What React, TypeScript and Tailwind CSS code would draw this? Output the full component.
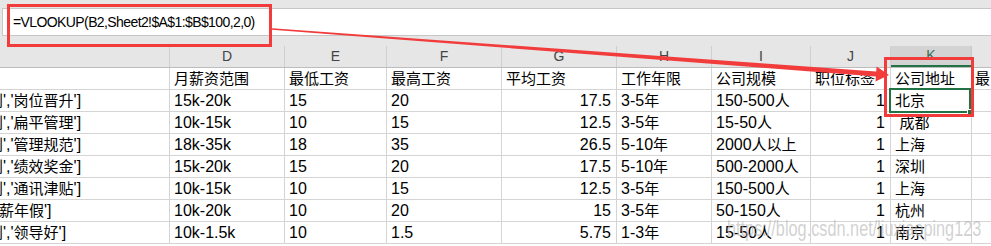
import React from "react";

const widths = [
  "w-[170px]",
  "w-[115px]",
  "w-[102px]",
  "w-[115px]",
  "w-[115px]",
  "w-[95px]",
  "w-[99px]",
  "w-[80px]",
  "w-[81px]",
  "flex-1",
];

const letters = ["", "D", "E", "F", "G", "H", "I", "J", "K", ""];

type Row = { c: string; off: string; cells: string[] };

const rows: Row[] = [
  { c: "", off: "", cells: ["月薪资范围", "最低工资", "最高工资", "平均工资", "工作年限", "公司规模", "职位标签", "公司地址", "最"] },
  { c: "利','岗位晋升']", off: "-ml-[12px]", cells: ["15k-20k", "15", "20", "17.5", "3-5年", "150-500人", "1", "北京", ""] },
  { c: "利','扁平管理']", off: "-ml-[12px]", cells: ["10k-15k", "10", "15", "12.5", "3-5年", "15-50人", "1", " 成都", ""] },
  { c: "利','管理规范']", off: "-ml-[12px]", cells: ["18k-35k", "18", "35", "26.5", "5-10年", "2000人以上", "1", "上海", ""] },
  { c: "利','绩效奖金']", off: "-ml-[12px]", cells: ["15k-20k", "15", "20", "17.5", "5-10年", "500-2000人", "1", "深圳", ""] },
  { c: "利','通讯津贴']", off: "-ml-[12px]", cells: ["10k-15k", "10", "15", "12.5", "3-5年", "150-500人", "1", "上海", ""] },
  { c: "薪年假']", off: "-ml-[1px]", cells: ["10k-20k", "10", "20", "15", "3-5年", "50-150人", "1", "杭州", ""] },
  { c: "利','领导好']", off: "-ml-[12px]", cells: ["10k-1.5k", "10", "1.5", "5.75", "1-3年", "15-50人", "1", "南京", ""] },
];

// CJK runs a bit smaller than the latin text, like the sheet font
function Txt({ s }: { s: string }) {
  const parts = s.split(/([\u2E80-\u9FFF]+)/);
  return (
    <>
      {parts.map((p, i) =>
        /[\u2E80-\u9FFF]/.test(p) ? (
          <span key={i} className="text-[15px]">
            {p}
          </span>
        ) : (
          <span key={i} className="whitespace-pre">{p}</span>
        )
      )}
    </>
  );
}

export default function App() {
  return (
    <div className="relative w-[991px] h-[246px] overflow-hidden bg-white text-black font-['Liberation_Sans','Noto_Sans_CJK_SC',sans-serif]">
      {/* formula bar */}
      <div className="h-[46px] bg-[#e6e6e6] pt-[8px] pl-[2px]">
        <div className="h-[28px] bg-white border border-r-0 border-[#c6c6c6] pl-[10px] text-[14px] tracking-[-0.6px] leading-[26px]">
          =VLOOKUP(B2,Sheet2!$A$1:$B$100,2,0)
        </div>
      </div>

      {/* column letters */}
      <div className="flex h-[22px] bg-[#e6e6e6] border-b border-[#bdbdbd] text-[14px] text-[#444]">
        {widths.map((w, i) => (
          <div
            key={i}
            className={
              i === 8
                ? `${w} shrink-0 flex items-center justify-center bg-[#d3d3d3] border-r border-[#c8c8c8] border-b-2 border-b-[#217346] text-[#3d6b4f]`
                : `${w} shrink-0 flex items-center justify-center border-r border-[#cfcfcf] ${i === 9 ? "border-r-0" : ""}`
            }
          >
            {letters[i]}
          </div>
        ))}
      </div>

      {/* cells */}
      {rows.map((r, ri) => (
        <div key={ri} className="flex h-[22px] border-b border-[#d4d4d4] text-[16px] leading-[22px]">
          <div className={`${widths[0]} shrink-0 overflow-hidden whitespace-nowrap border-r border-[#d4d4d4]`}>
            <span className={`inline-block ${r.off}`}>
              <Txt s={r.c} />
            </span>
          </div>
          {r.cells.map((c, ci) => {
            const right = ri > 0 && (ci === 3 || ci === 6);
            return (
              <div
                key={ci}
                className={`${widths[ci + 1]} shrink-0 overflow-hidden whitespace-nowrap ${
                  ci === 8 ? "pl-[3px]" : "border-r border-[#d4d4d4] px-[4px]"
                } ${right ? "text-right pr-[5px]" : ""}`}
              >
                <Txt s={c} />
              </div>
            );
          })}
        </div>
      ))}

      {/* watermark */}
      <div className="absolute left-[727px] top-[212px] pointer-events-none origin-left scale-x-[0.74] whitespace-nowrap text-[22px] text-[#b4b4b4]/60">
        https://blog.csdn.net/liuxiaoping123
      </div>

      {/* selected cell K2 */}
      <div className="absolute left-[889px] top-[88px] w-[82px] h-[25px] border-2 border-[#217346]">
        <div className="absolute -right-[4px] -bottom-[4px] w-[6px] h-[6px] bg-[#217346] border border-white" />
      </div>

      {/* red annotation boxes */}
      <div className="absolute left-[7px] top-[4px] w-[265px] h-[43px] border-[3px] border-[#f23c3c]" />
      <div className="absolute left-[884px] top-[57px] w-[90px] h-[60px] border-[3px] border-[#f23c3c]" />

      {/* arrow */}
      <svg className="absolute inset-0 pointer-events-none" width="991" height="246" viewBox="0 0 991 246">
        <polygon
          fill="#f23c3c"
          points="272.06,28.2 876.23,71.54 876.6,66.55 889,75 875.48,81.51 875.85,76.52 271.94,29.8"
        />
      </svg>
    </div>
  );
}
